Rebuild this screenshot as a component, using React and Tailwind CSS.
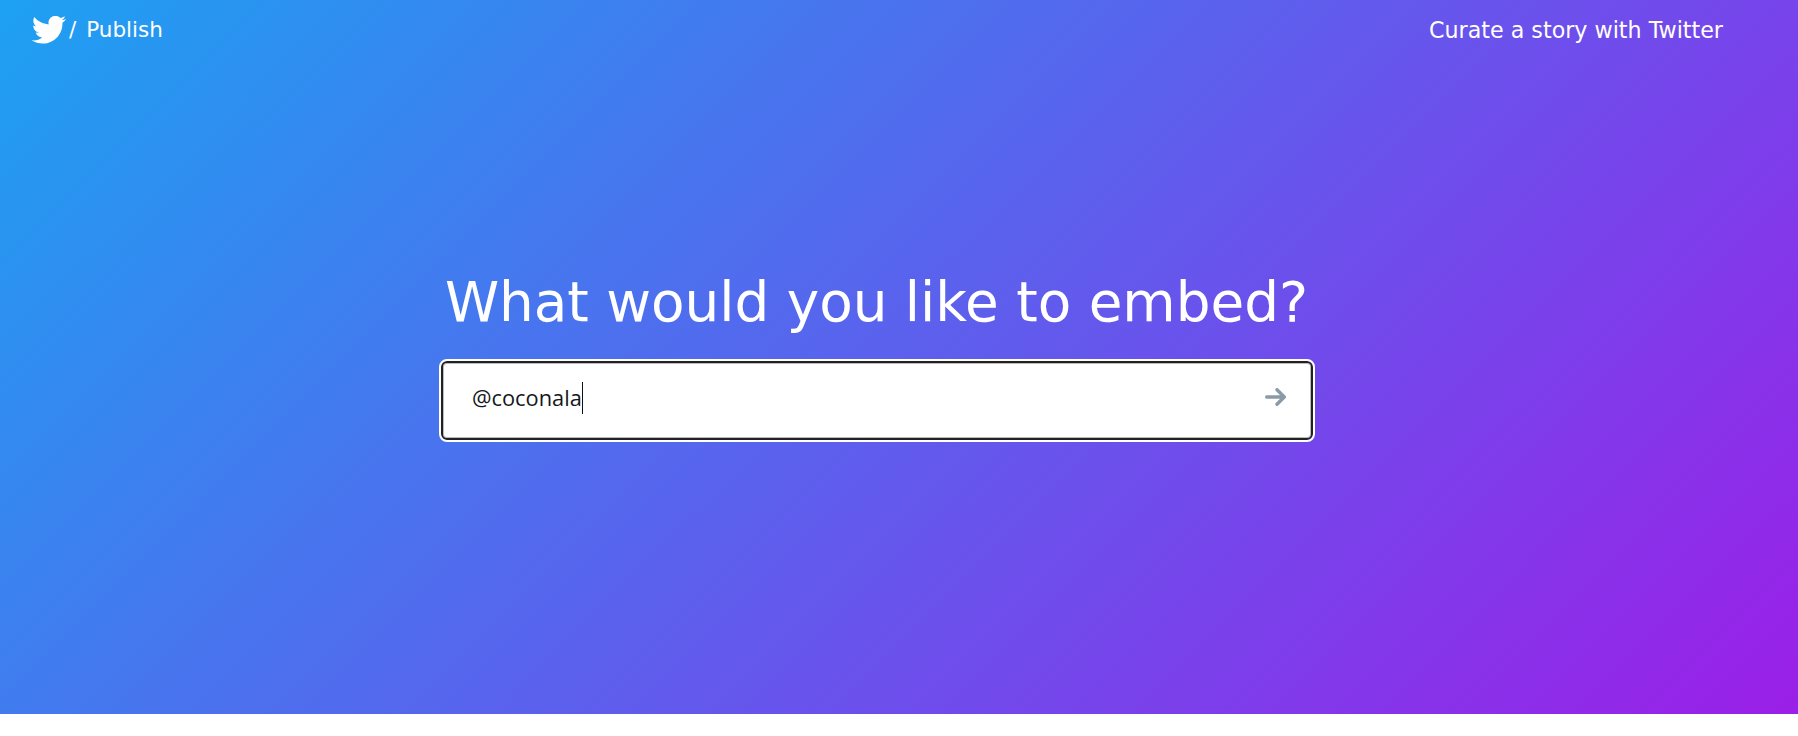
const Bird = () => (
  <svg viewBox="1 2.9 22.7 18.6" className="w-[34px] h-[28px] fill-white">
    <path d="M23.643 4.937c-.835.37-1.732.62-2.675.733.962-.576 1.7-1.49 2.048-2.578-.9.534-1.897.922-2.958 1.13-.85-.904-2.06-1.47-3.4-1.47-2.572 0-4.658 2.086-4.658 4.66 0 .364.042.718.12 1.06-3.873-.195-7.304-2.05-9.602-4.868-.4.69-.63 1.49-.63 2.342 0 1.616.823 3.043 2.072 3.878-.764-.025-1.482-.234-2.11-.583v.06c0 2.257 1.605 4.14 3.737 4.568-.392.106-.803.162-1.227.162-.3 0-.593-.028-.877-.082.593 1.85 2.313 3.198 4.352 3.234-1.595 1.25-3.604 1.995-5.786 1.995-.376 0-.747-.022-1.112-.065 2.062 1.323 4.51 2.093 7.14 2.093 8.57 0 13.255-7.098 13.255-13.254 0-.2-.005-.402-.014-.602.91-.658 1.7-1.477 2.323-2.41z" />
  </svg>
);

export default function App() {
  return (
    <div className="h-[714px] w-full bg-[linear-gradient(135deg,#1da1f2,#9b1fe8)] text-white font-['DejaVu_Sans',sans-serif]">
      <div className="flex items-center justify-between pl-8 pr-[75px] pt-[16px]">
        <div className="flex items-center gap-[3px] text-[21.5px] leading-[28px]">
          <Bird />
          <span>/</span>
          <span className="ml-[7px]">Publish</span>
        </div>
        <div className="text-[22.2px] leading-[28px]">Curate a story with Twitter</div>
      </div>
      <div className="flex flex-col items-center pt-[223px] pr-[45px]">
        <h1 className="text-[54.8px] leading-[70px]">What would you like to embed?</h1>
        <div className="mt-[24px] w-[872px] h-[79px] rounded-md bg-white border-[2.5px] border-[#222] shadow-[inset_0_0_0_1px_#bbb] outline-2 outline-white flex items-center justify-between pl-[29.5px] pr-[24.5px] text-[#14171a]">
          <span className="text-[21.8px] leading-[32px] font-['Open_Sans',sans-serif] border-r border-[#111] mb-[6px]">@coconala</span>
          <svg viewBox="0 0 21 18" className="w-[21px] h-[18px] fill-none stroke-[#8a9ba8] stroke-[3.4] mb-[8px]">
            <path d="M1.7 9h17.6M12 1.7 19.3 9 12 16.3" strokeLinecap="round" strokeLinejoin="round" />
          </svg>
        </div>
      </div>
    </div>
  );
}
